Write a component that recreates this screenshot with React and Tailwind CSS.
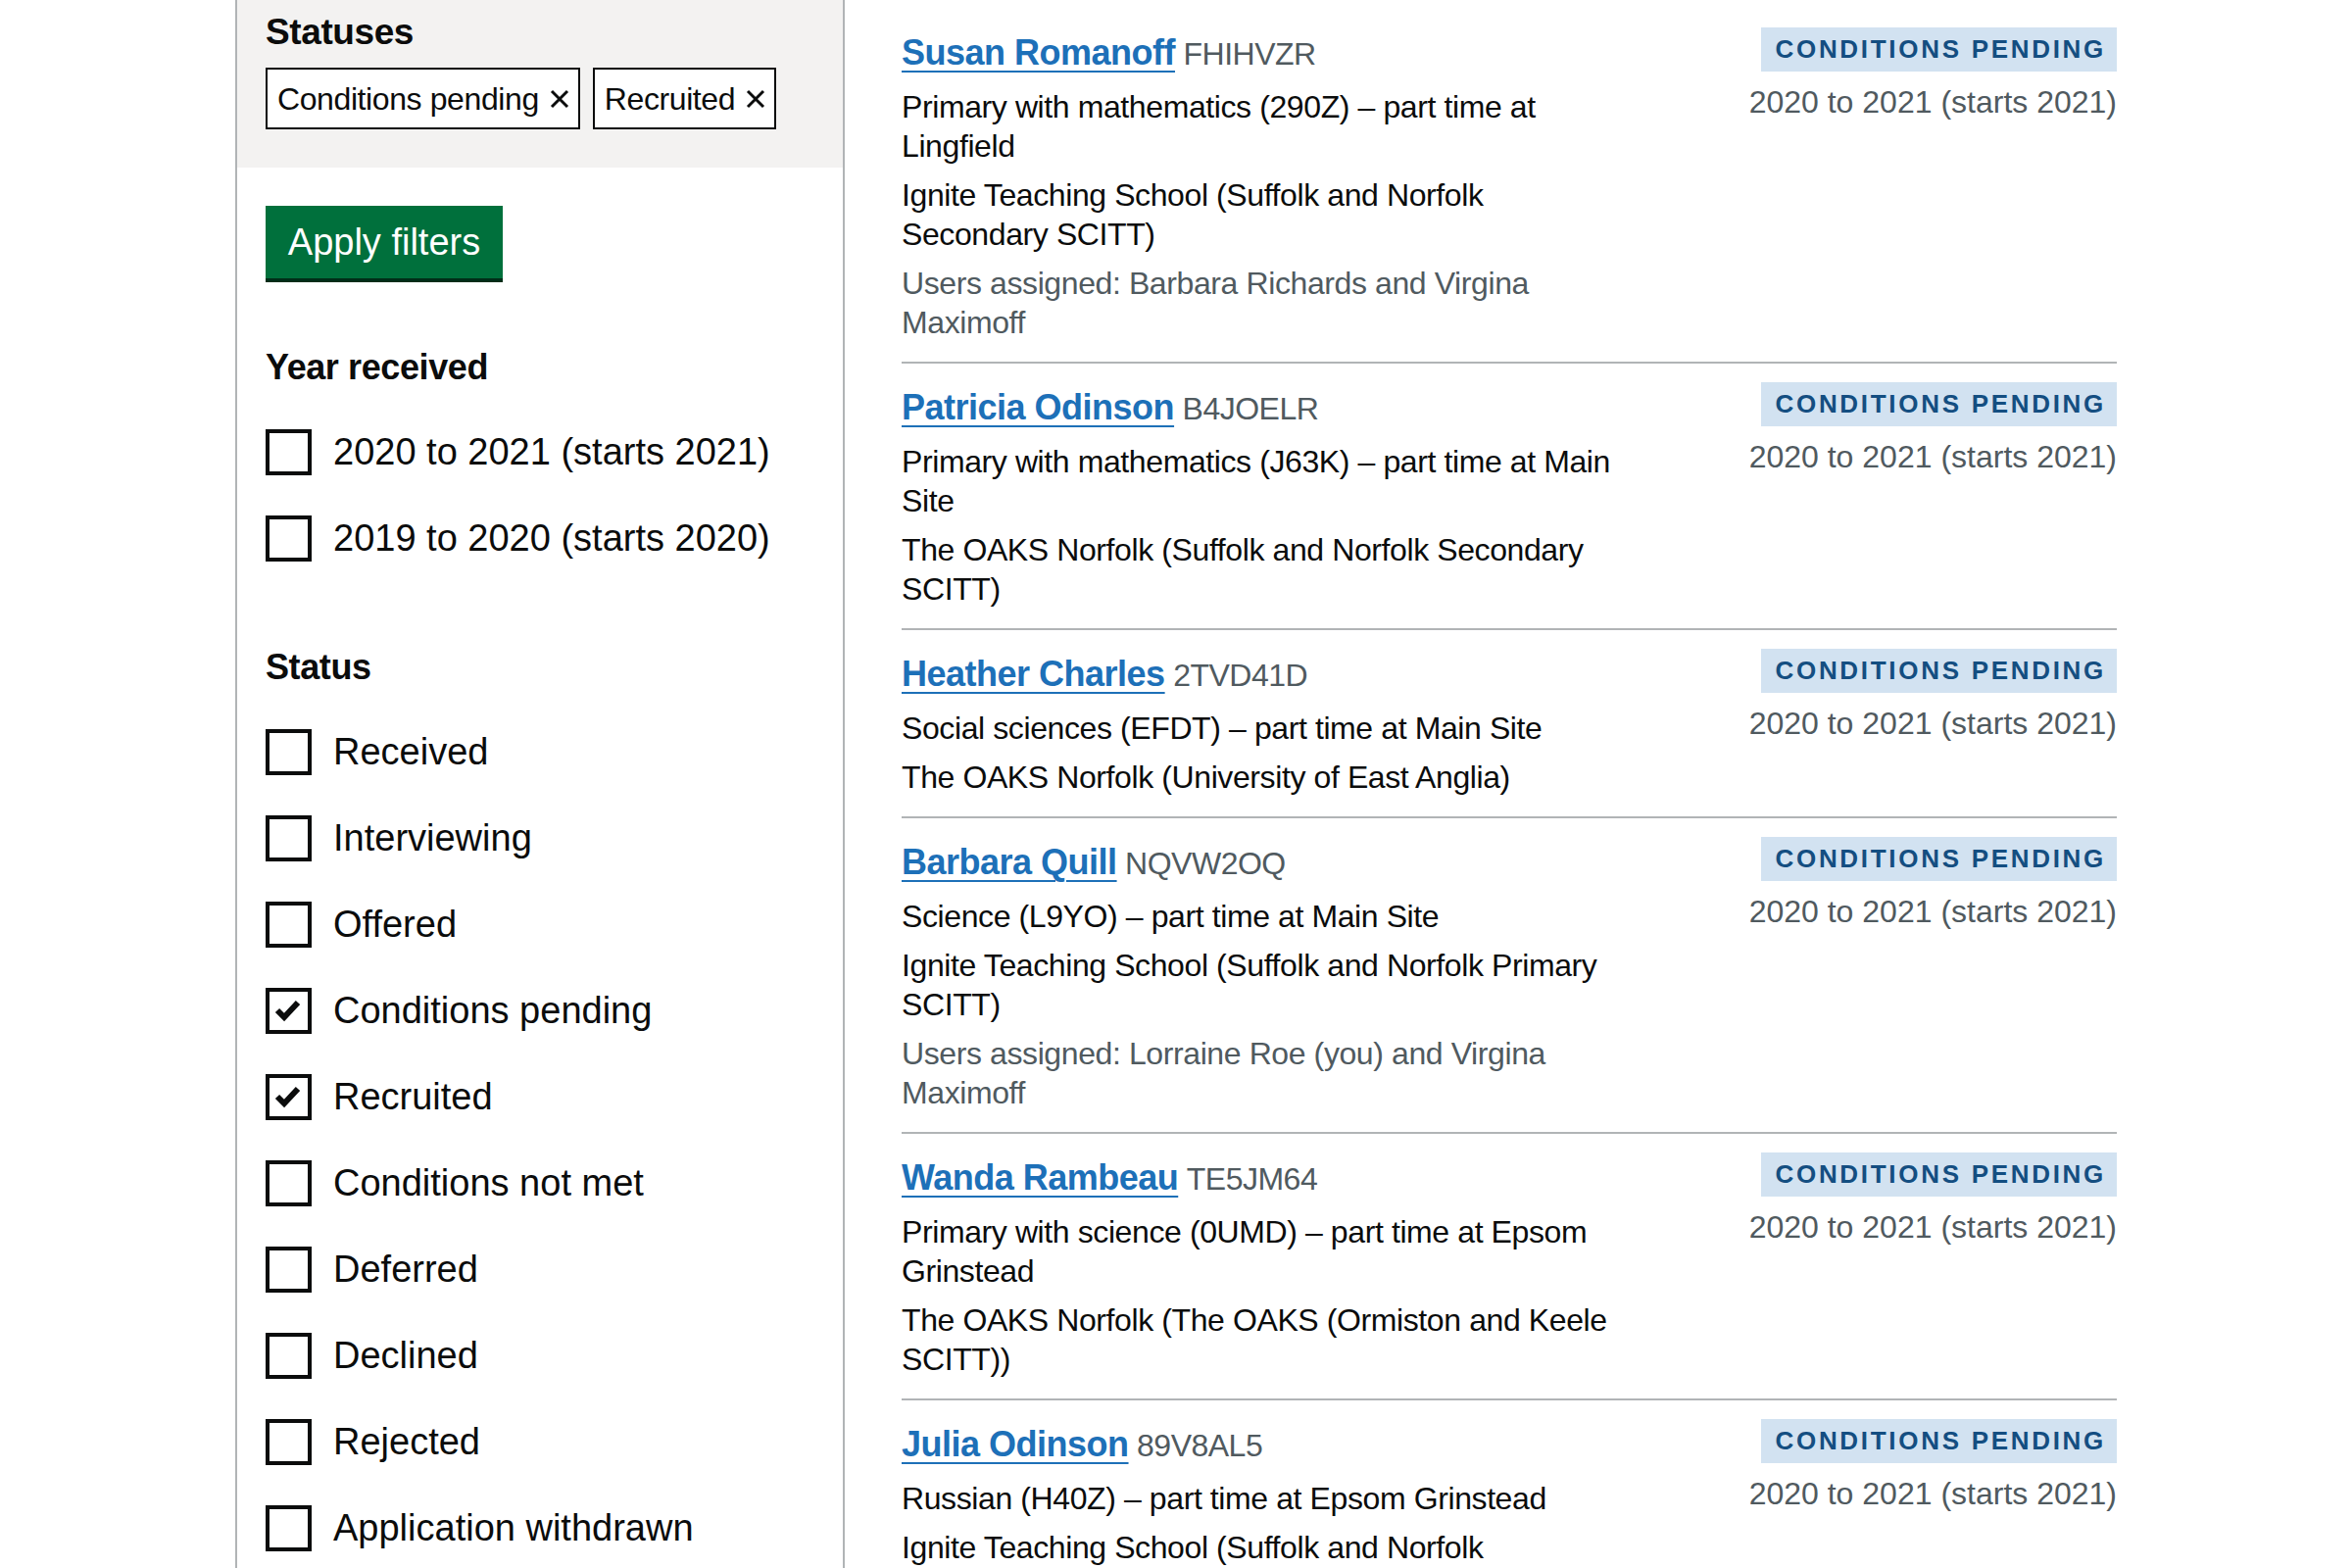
import { Fragment } from 'react';

const yearOptions = [
  { label: '2020 to 2021 (starts 2021)', checked: false },
  { label: '2019 to 2020 (starts 2020)', checked: false },
];

const statusOptions = [
  { label: 'Received', checked: false },
  { label: 'Interviewing', checked: false },
  { label: 'Offered', checked: false },
  { label: 'Conditions pending', checked: true },
  { label: 'Recruited', checked: true },
  { label: 'Conditions not met', checked: false },
  { label: 'Deferred', checked: false },
  { label: 'Declined', checked: false },
  { label: 'Rejected', checked: false },
  { label: 'Application withdrawn', checked: false },
];

const applications = [
  {
    name: 'Susan Romanoff',
    ref: 'FHIHVZR',
    course: 'Primary with mathematics (290Z) – part time at Lingfield',
    provider: 'Ignite Teaching School (Suffolk and Norfolk Secondary SCITT)',
    users: 'Users assigned: Barbara Richards and Virgina Maximoff',
  },
  {
    name: 'Patricia Odinson',
    ref: 'B4JOELR',
    course: 'Primary with mathematics (J63K) – part time at Main Site',
    provider: 'The OAKS Norfolk (Suffolk and Norfolk Secondary SCITT)',
  },
  {
    name: 'Heather Charles',
    ref: '2TVD41D',
    course: 'Social sciences (EFDT) – part time at Main Site',
    provider: 'The OAKS Norfolk (University of East Anglia)',
  },
  {
    name: 'Barbara Quill',
    ref: 'NQVW2OQ',
    course: 'Science (L9YO) – part time at Main Site',
    provider: 'Ignite Teaching School (Suffolk and Norfolk Primary SCITT)',
    users: 'Users assigned: Lorraine Roe (you) and Virgina Maximoff',
  },
  {
    name: 'Wanda Rambeau',
    ref: 'TE5JM64',
    course: 'Primary with science (0UMD) – part time at Epsom Grinstead',
    provider: 'The OAKS Norfolk (The OAKS (Ormiston and Keele SCITT))',
  },
  {
    name: 'Julia Odinson',
    ref: '89V8AL5',
    course: 'Russian (H40Z) – part time at Epsom Grinstead',
    provider: 'Ignite Teaching School (Suffolk and Norfolk',
  },
];

function CrossIcon() {
  return (
    <svg width="22" height="22" viewBox="0 0 22 22" aria-hidden="true">
      <path d="M3 3 L19 19 M19 3 L3 19" stroke="#0b0c0c" strokeWidth="3" fill="none" />
    </svg>
  );
}

function FilterChip({ label }) {
  return (
    <span className="inline-flex h-[63px] items-center gap-[10px] border-2 border-[#0b0c0c] bg-white pl-[10px] pr-[8px] text-[32px] tracking-[-0.4px]">
      {label}
      <CrossIcon />
    </span>
  );
}

function Checkbox({ label, checked }) {
  return (
    <label className="flex h-[88px] items-center">
      <span className="relative h-[47px] w-[47px] shrink-0 border-[4px] border-[#0b0c0c] bg-white">
        {checked && (
          <svg className="absolute left-0 top-0" width="39" height="39" viewBox="0 0 39 39" aria-hidden="true">
            <path d="M8 19 L15 26 L29 11" stroke="#0b0c0c" strokeWidth="6" fill="none" />
          </svg>
        )}
      </span>
      <span className="ml-[22px] text-[38px] leading-[50px]">{label}</span>
    </label>
  );
}

function FilterGroup({ title, options, className }) {
  return (
    <div className={className}>
      <h3 className="text-[36px] font-bold leading-[50px] tracking-[-0.4px]">{title}</h3>
      <div className="mt-[17px]">
        {options.map((o) => (
          <Checkbox key={o.label} label={o.label} checked={o.checked} />
        ))}
      </div>
    </div>
  );
}

function ApplicationRow({ app }) {
  return (
    <div className="flex justify-between pt-[21px] pb-[20px]">
      <div className="w-[740px] text-[32px] leading-[40px] tracking-[-0.4px]">
        <p className="leading-[48px]">
          <a href="#" className="text-[36px] font-bold tracking-[-0.5px] text-[#1d70b8] underline decoration-2 underline-offset-[6px]">
            {app.name}
          </a>{' '}
          <span className="text-[32px] tracking-[-0.5px] text-[#505a5f]">{app.ref}</span>
        </p>
        <p className="mt-[10px]">{app.course}</p>
        <p className="mt-[10px]">{app.provider}</p>
        {app.users && <p className="mt-[10px] text-[#505a5f]">{app.users}</p>}
      </div>
      <div className="flex flex-col items-end">
        <strong className="-mt-[2px] inline-flex h-[45px] items-center bg-[#d2e2f1] pl-[14px] pr-[11px] text-[26px] font-bold uppercase tracking-[2.7px] text-[#144e81]">
          Conditions pending
        </strong>
        <p className="mt-[11px] text-[32px] leading-[40px] text-[#505a5f]">2020 to 2021 (starts 2021)</p>
      </div>
    </div>
  );
}

export default function App() {
  return (
    <div className="min-h-screen bg-white font-['Liberation_Sans',Arial,sans-serif] text-[#0b0c0c]">
      <div className="mx-auto flex w-[1920px]">
        <aside className="w-[622px] shrink-0 border-x-2 border-[#b1b4b6]">
          <div className="bg-[#f3f2f1] px-[29px] pt-[8px] pb-[39px]">
            <h3 className="text-[37px] font-bold leading-[50px] tracking-[-0.4px]">Statuses</h3>
            <div className="mt-[11px] flex gap-[13px]">
              <FilterChip label="Conditions pending" />
              <FilterChip label="Recruited" />
            </div>
          </div>
          <div className="px-[29px] pb-[60px]">
            <button className="mt-[39px] h-[74px] w-[242px] bg-[#00703c] text-[38px] text-white shadow-[0_4px_0_#002d18]">
              Apply filters
            </button>
            <FilterGroup title="Year received" options={yearOptions} className="mt-[66px]" />
            <FilterGroup title="Status" options={statusOptions} className="mt-[63px]" />
          </div>
        </aside>
        <main className="flex-1 pl-[58px] pt-[9px]">
          <div className="divide-y-2 divide-[#b1b4b6]">
            {applications.map((app) => (
              <Fragment key={app.ref}>
                <ApplicationRow app={app} />
              </Fragment>
            ))}
          </div>
        </main>
      </div>
    </div>
  );
}
